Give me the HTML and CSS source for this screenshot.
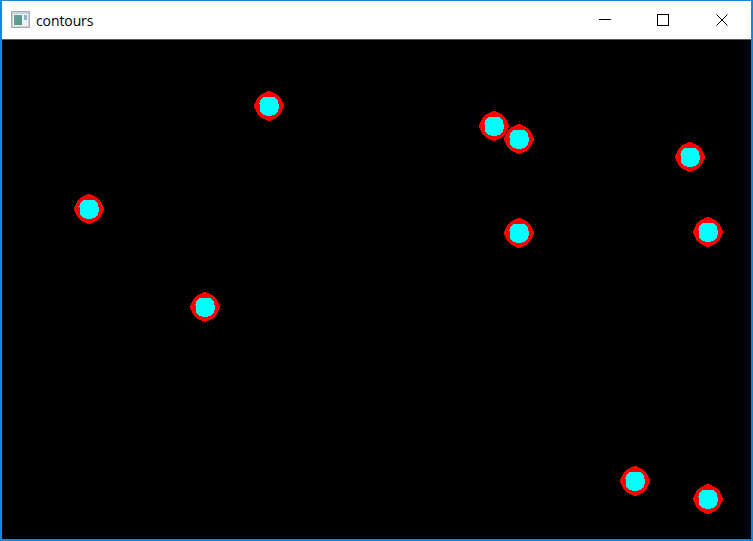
FILE: index.html
```html
<!DOCTYPE html>
<html lang="en">
<head>
  <meta charset="UTF-8">
  <title>contours</title>
  <link rel="stylesheet" href="styles.css">
</head>
<body>
  <div class="window">
    <div class="titlebar">
      <svg class="app-icon" width="20" height="18" viewBox="0 0 20 18">
        <defs>
          <linearGradient id="pane" x1="0" y1="0" x2="1" y2="1">
            <stop offset="0" stop-color="#6f9fa8"/>
            <stop offset="1" stop-color="#4f9a78"/>
          </linearGradient>
          <filter id="soft"><feGaussianBlur stdDeviation="0.5"/></filter>
        </defs>
        <g filter="url(#soft)">
          <rect x="0.5" y="0.5" width="18" height="16" fill="#cfd2d4" stroke="#a9abad"/>
          <rect x="2" y="3" width="15" height="12" fill="#eef2f4"/>
          <rect x="3" y="4" width="8" height="10" fill="url(#pane)"/>
          <rect x="13" y="4" width="3" height="5" fill="#8fb4cc"/>
        </g>
      </svg>
      <span class="title">contours</span>
      <div class="controls">
        <button class="control">
          <svg width="14" height="12" viewBox="0 0 14 12"><path d="M2 5.5H14" stroke="#000"/></svg>
        </button>
        <button class="control">
          <svg width="12" height="12" viewBox="0 0 12 12"><rect x="0.5" y="0.5" width="11" height="11" fill="none" stroke="#000"/></svg>
        </button>
        <button class="control">
          <svg width="12" height="12" viewBox="0 0 12 12"><path d="M0.5 0.5L11.5 11.5M11.5 0.5L0.5 11.5" stroke="#000" fill="none"/></svg>
        </button>
      </div>
    </div>
    <svg class="canvas" width="749" height="500" viewBox="2 40 749 500" shape-rendering="crispEdges">
      <defs>
        <g id="blob">
          <circle r="14" fill="#ff0000"/>
          <path d="M-2-15H2V15H-2ZM-15-2V2H15V-2Z" fill="#ff0000"/>
          <rect x="-9.5" y="-9.5" width="19" height="19" rx="7" fill="#00ffff"/>
        </g>
      </defs>
      <use href="#blob" x="269" y="106"/>
      <use href="#blob" x="494" y="126"/>
      <use href="#blob" x="519" y="139"/>
      <use href="#blob" x="690" y="157"/>
      <use href="#blob" x="89" y="209"/>
      <use href="#blob" x="519" y="233"/>
      <use href="#blob" x="708" y="232"/>
      <use href="#blob" x="205" y="307"/>
      <use href="#blob" x="635" y="481"/>
      <use href="#blob" x="708" y="499"/>
    </svg>
  </div>
</body>
</html>
```

FILE: styles.css
```css
* {
  margin: 0;
  padding: 0;
  box-sizing: border-box;
}
html, body {
  width: 753px;
  height: 541px;
  overflow: hidden;
  background: #000;
}
.window {
  width: 753px;
  height: 541px;
  display: flex;
  flex-direction: column;
  background: #000;
  border: 2px solid #1a86d9;
  border-top-width: 1px;
  font-family: 'Segoe UI', 'Open Sans', 'Noto Sans', sans-serif;
}
.titlebar {
  height: 39px;
  flex: none;
  display: flex;
  align-items: center;
  background: #fff;
  border-bottom: 1px solid #5a5a5a;
  padding-left: 9px;
}
.app-icon {
  margin-right: 5px;
}
.title {
  font-size: 14px;
  letter-spacing: -0.1px;
  color: #000;
}
.controls {
  margin-left: auto;
  display: flex;
  gap: 1px;
}
.control {
  width: 58px;
  height: 38px;
  border: none;
  background: none;
  display: flex;
  align-items: center;
  justify-content: center;
}
.canvas {
  display: block;
  flex: none;
}
```
